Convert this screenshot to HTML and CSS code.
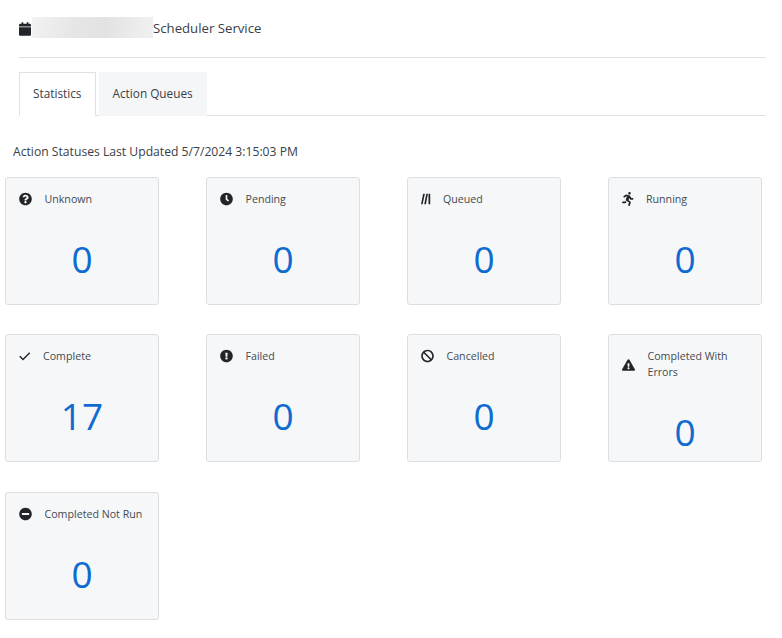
FILE: index.html
```html
<!DOCTYPE html>
<html lang="en">
<head>
<meta charset="utf-8">
<title>Scheduler Service</title>
<link rel="stylesheet" href="styles.css">
</head>
<body>
<header class="title-bar">
  <svg class="cal" viewBox="0 0 448 512"><path d="M12 192h424c6.600 0 12 5.400 12 12v260c0 26.500-21.500 48-48 48H48c-26.500 0-48-21.500-48-48V204c0-6.600 5.400-12 12-12zm436-44v-36c0-26.500-21.500-48-48-48h-48V12c0-6.600-5.400-12-12-12h-40c-6.600 0-12 5.400-12 12v52H160V12c0-6.600-5.400-12-12-12h-40c-6.600 0-12 5.400-12 12v52H48C21.500 64 0 85.500 0 112v36c0 6.600 5.400 12 12 12h424c6.600 0 12-5.400 12-12z"/></svg>
  <span class="redacted"></span>
  <span class="title">Scheduler Service</span>
</header>
<nav class="tabs">
  <a class="tab active">Statistics</a>
  <a class="tab">Action Queues</a>
</nav>
<p class="updated">Action Statuses Last Updated 5/7/2024 3:15:03 PM</p>
<main class="grid">
  <section class="card">
    <div class="head"><svg class="ico" viewBox="0 0 512 512"><path d="M504 256c0 136.997-111.043 248-248 248S8 392.997 8 256C8 119.083 119.043 8 256 8s248 111.083 248 248zM262.655 90c-54.497 0-89.255 22.957-116.549 63.758-3.536 5.286-2.353 12.415 2.715 16.258l34.699 26.310c5.205 3.947 12.621 3.008 16.665-2.122 17.864-22.658 30.113-35.797 57.303-35.797 20.429 0 45.698 13.148 45.698 32.958 0 14.976-12.363 22.667-32.534 33.976C247.128 238.528 216 254.941 216 296v4c0 6.627 5.373 12 12 12h56c6.627 0 12-5.373 12-12v-1.333c0-28.462 83.186-29.647 83.186-106.667 0-58.002-60.165-102-116.531-102zM256 338c-25.365 0-46 20.635-46 46 0 25.364 20.635 46 46 46s46-20.636 46-46c0-25.365-20.635-46-46-46z"/></svg><span>Unknown</span></div>
    <div class="num">0</div>
  </section>
  <section class="card">
    <div class="head"><svg class="ico" viewBox="0 0 512 512"><path d="M256,8C119,8,8,119,8,256S119,504,256,504,504,393,504,256,393,8,256,8Zm92.490,313h0l-20,25a16,16,0,0,1-22.490,2.500h0l-67-49.720a40,40,0,0,1-15-31.230V112a16,16,0,0,1,16-16h32a16,16,0,0,1,16,16V256l58,42.500A16,16,0,0,1,348.490,321Z"/></svg><span>Pending</span></div>
    <div class="num">0</div>
  </section>
  <section class="card">
    <div class="head"><svg class="ico queue" viewBox="0 0 10 14"><path d="M2.300 1.500h1.800L1.700 12.500H0zM5.600 1.500h1.700L5.200 12.500H3.400zM7.900 1.500h1.800v11H7.900z"/></svg><span>Queued</span></div>
    <div class="num">0</div>
  </section>
  <section class="card">
    <div class="head"><svg class="ico narrow" viewBox="0 0 416 512"><path d="M272 96c26.510 0 48-21.490 48-48S298.510 0 272 0s-48 21.490-48 48 21.490 48 48 48zM113.690 317.470l-14.800 34.520H32c-17.670 0-32 14.330-32 32s14.330 32 32 32h77.450c19.250 0 36.580-11.440 44.110-29.090l8.790-20.520-10.670-6.300c-17.320-10.230-30.060-25.370-37.990-42.610zM384 223.990h-44.030l-26.060-53.250c-12.500-25.550-35.450-44.230-61.780-50.940l-71.080-21.140c-28.300-6.800-57.770-.55-80.840 17.140l-39.670 30.410c-14.030 10.750-16.690 30.830-5.920 44.860s30.840 16.660 44.860 5.920l39.690-30.410c7.670-5.890 17.440-8 25.270-6.140l14.700 4.370-37.460 87.390c-12.620 29.480-1.310 64.010 26.300 80.310l84.980 50.170-27.470 87.730c-5.280 16.860 4.110 34.810 20.970 40.090 3.190 1 6.410 1.480 9.580 1.480 13.610 0 26.230-8.770 30.520-22.450l31.640-101.060c5.910-20.770-2.890-43.080-21.640-54.390l-61.240-36.140 31.310-78.280 20.270 41.430c8 16.340 24.920 26.890 43.110 26.890H384c17.670 0 32-14.330 32-32s-14.330-31.990-32-31.990z"/></svg><span>Running</span></div>
    <div class="num">0</div>
  </section>
  <section class="card">
    <div class="head"><svg class="ico check" viewBox="0 0 12 14"><path d="M.8 7.300l3.400 3.400L11.200 3.700"/></svg><span>Complete</span></div>
    <div class="num">17</div>
  </section>
  <section class="card">
    <div class="head"><svg class="ico" viewBox="0 0 512 512"><path d="M504 256c0 136.997-111.043 248-248 248S8 392.997 8 256C8 119.083 119.043 8 256 8s248 111.083 248 248zm-248 50c-25.405 0-46 20.595-46 46s20.595 46 46 46 46-20.595 46-46-20.595-46-46-46zm-43.673-165.346l7.418 136c.347 6.364 5.609 11.346 11.982 11.346h48.546c6.373 0 11.635-4.982 11.982-11.346l7.418-136c.375-6.874-5.098-12.654-11.982-12.654h-63.383c-6.884 0-12.356 5.780-11.981 12.654z"/></svg><span>Failed</span></div>
    <div class="num">0</div>
  </section>
  <section class="card">
    <div class="head"><svg class="ico" viewBox="0 0 512 512"><path d="M256 8C119.034 8 8 119.033 8 256s111.034 248 248 248 248-111.034 248-248S392.967 8 256 8zm130.108 117.892c65.448 65.448 70 165.481 20.677 235.637L150.470 105.216c70.204-49.356 170.226-44.735 235.638 20.676zM125.892 386.108c-65.448-65.448-70-165.481-20.677-235.637L361.530 406.784c-70.203 49.356-170.226 44.736-235.638-20.676z"/></svg><span>Cancelled</span></div>
    <div class="num">0</div>
  </section>
  <section class="card">
    <div class="head center"><svg class="ico" viewBox="0 0 576 512"><path d="M569.517 440.013C587.975 472.007 564.806 512 527.940 512H48.054c-36.937 0-59.999-40.055-41.577-71.987L246.423 24.035c18.467-32.009 64.720-31.951 83.154 0l239.940 416.978zM288 354c-25.405 0-46 20.595-46 46s20.595 46 46 46 46-20.595 46-46-20.595-46-46-46zm-43.673-165.346l7.418 136c.347 6.364 5.609 11.346 11.982 11.346h48.546c6.373 0 11.635-4.982 11.982-11.346l7.418-136c.375-6.874-5.098-12.654-11.982-12.654h-63.383c-6.884 0-12.356 5.780-11.981 12.654z"/></svg><span>Completed With Errors</span></div>
    <div class="num">0</div>
  </section>
  <section class="card">
    <div class="head"><svg class="ico" viewBox="0 0 512 512"><path d="M256 8C119 8 8 119 8 256s111 248 248 248 248-111 248-248S393 8 256 8zM124 296c-6.600 0-12-5.400-12-12v-56c0-6.600 5.400-12 12-12h264c6.600 0 12 5.400 12 12v56c0 6.600-5.400 12-12 12H124z"/></svg><span>Completed Not Run</span></div>
    <div class="num">0</div>
  </section>
</main>
</body>
</html>
```

FILE: styles.css
```css
* { box-sizing: border-box; }
html, body { margin: 0; padding: 0; background: #fff; }
body {
  font-family: "Open Sans", "Noto Sans", sans-serif;
  color: #212529;
  height: 638px;
  overflow: hidden;
}
.title-bar {
  display: flex;
  align-items: center;
  margin: 17px 16px 0 19px;
  height: 41px;
  padding-bottom: 20px;
  border-bottom: 1px solid #dee2e6;
  font-size: 13.200px;
}
.cal { width: 12px; height: 14px; fill: #212529; margin-right: 1px; margin-top: 3px; flex: none; }
.redacted {
  width: 121px;
  height: 21px;
  background: linear-gradient(100deg, #f2f2f2 0%, #e6e6e6 35%, #e2e2e2 60%, #ececec 85%, #f0f0f0 100%);
  flex: none;
}
.title { color: #3a4046; margin-top: 2px; }
.tabs {
  display: flex;
  gap: 3px;
  margin: 14px 16px 0 19px;
  border-bottom: 1px solid #dee2e6;
  height: 44px;
}
.tab {
  display: flex;
  align-items: center;
  height: 44px;
  padding: 0 13px 2px;
  font-size: 11.800px;
  border: 1px solid transparent;
  background: #f5f6f8;
  color: #3a4046;
}
.tab.active {
  background: #fff;
  border-color: #dee2e6;
  border-bottom-color: #fff;
}
.updated {
  margin: 27px 0 0 13px;
  font-size: 12.170px;
  line-height: 18px;
  color: #3a4046;
}
.grid {
  display: grid;
  grid-template-columns: repeat(4, 154px);
  column-gap: 47px;
  row-gap: 29.500px;
  margin: 15.750px 0 0 5px;
}
.card {
  height: 128px;
  display: flex;
  flex-direction: column;
  padding: 13px 13px 0;
  background: #f6f7f9;
  border: 1px solid #dcdfe2;
  border-radius: 3px;
}
.head {
  display: flex;
  align-items: flex-start;
  gap: 12.500px;
  font-size: 10.650px;
  line-height: 16px;
  color: #444a50;
}
.head.center { align-items: center; }
.ico { width: 13px; height: 14px; margin-top: 1px; fill: #212529; flex: none; }
.ico.narrow { width: 11.500px; }
.ico.queue { width: 9.500px; }
.ico.check { width: 11.500px; fill: none; stroke: #212529; stroke-width: 1.500; }
.num {
  margin: 27px -13px 0;
  text-align: center;
  font-size: 37px;
  font-weight: 400;
  line-height: 50px;
  color: #0f6bcf;
}
```
